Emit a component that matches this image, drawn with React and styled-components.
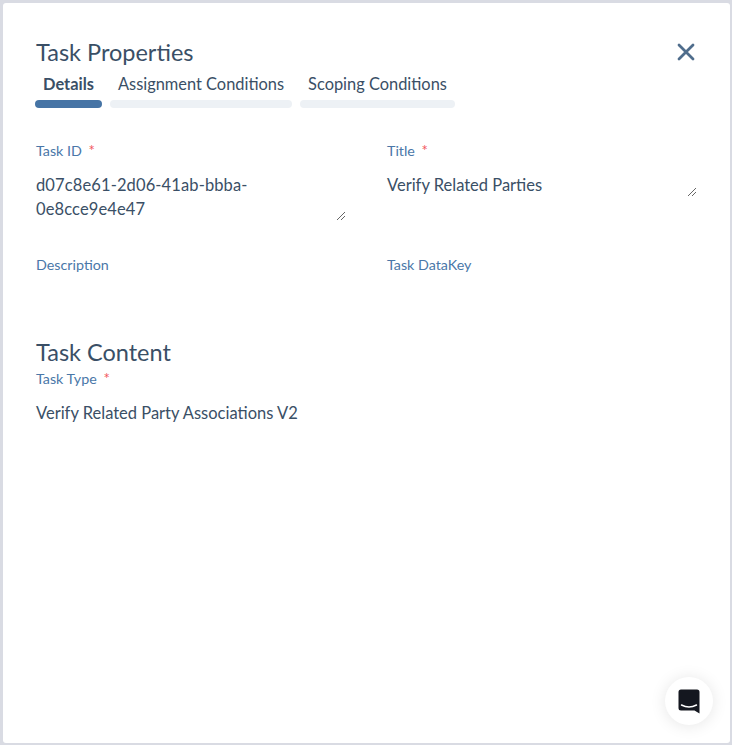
import React from 'react';
import styled, { createGlobalStyle } from 'styled-components';

const GlobalStyle = createGlobalStyle`
  html, body {
    margin: 0;
    padding: 0;
    background: #d9dbe3;
  }
  body {
    font-family: "Lato", "Open Sans", "Liberation Sans", sans-serif;
  }
`;

const App = () => (
  <>
    <GlobalStyle />
    <Page>
      <Panel>
        <Header>
          <Title>Task Properties</Title>
          <CloseButton aria-label="Close">
            <svg width="18" height="18" viewBox="0 0 18 18" fill="none">
              <path d="M2 2 L16 16 M16 2 L2 16" stroke="#4f6d8c" strokeWidth="2.8" strokeLinecap="round" />
            </svg>
          </CloseButton>
        </Header>
        <Tabs>
          <Tab $width={67}>
            <TabLabel $active>Details</TabLabel>
            <TabBar $active />
          </Tab>
          <Tab $width={182}>
            <TabLabel>Assignment Conditions</TabLabel>
            <TabBar />
          </Tab>
          <Tab $width={155}>
            <TabLabel>Scoping Conditions</TabLabel>
            <TabBar />
          </Tab>
        </Tabs>
        <FieldGrid>
          <Field $height={115}>
            <Label>Task ID <Required>*</Required></Label>
            <Value $spacing={0.12}>d07c8e61-2d06-41ab-bbba-<br />0e8cce9e4e47</Value>
            <ResizeGrip $top={71} />
          </Field>
          <Field $height={115}>
            <Label>Title <Required>*</Required></Label>
            <Value>Verify Related Parties</Value>
            <ResizeGrip $top={47} />
          </Field>
          <Field $height={82}>
            <Label>Description</Label>
          </Field>
          <Field $height={82}>
            <Label>Task DataKey</Label>
          </Field>
        </FieldGrid>
        <SectionTitle>Task Content</SectionTitle>
        <Label>Task Type <Required>*</Required></Label>
        <Value>Verify Related Party Associations V2</Value>
      </Panel>
      <ChatBubble aria-label="Chat">
        <svg width="22" height="25" viewBox="0 0 22 25">
          <path
            d="M3 0.5 H19 A2.5 2.5 0 0 1 21.5 3 V24.5 L16.5 21.5 H3 A2.5 2.5 0 0 1 0.5 19 V3 A2.5 2.5 0 0 1 3 0.5 Z"
            fill="#14171f"
          />
          <path d="M3.5 16 Q11 20 18.5 16" fill="none" stroke="#fff" strokeWidth="1.5" strokeLinecap="round" />
        </svg>
      </ChatBubble>
    </Page>
  </>
);

const Page = styled.div`
  position: relative;
  box-sizing: border-box;
  width: 732px;
  height: 745px;
  padding: 3px 2px 2px 3px;
  overflow: hidden;
`;

const Panel = styled.div`
  box-sizing: border-box;
  height: 740px;
  padding: 35px 33px 0;
  background: #fff;
  border-radius: 3px;
  color: #33475b;
`;

const Header = styled.div`
  display: flex;
  align-items: flex-start;
  justify-content: space-between;
  height: 28px;
  padding-right: 2px;
`;

const Title = styled.h1`
  margin: 0;
  font-size: 23.5px;
  line-height: 28px;
  font-weight: 400;
  color: #3a4f66;
`;

const CloseButton = styled.button`
  display: flex;
  margin: 5px 0 0;
  padding: 0;
  border: 0;
  background: none;
`;

const Tabs = styled.div`
  display: flex;
  gap: 8px;
  margin: 9px 0 0 -1px;
`;

const Tab = styled.div`
  display: flex;
  flex-direction: column;
  gap: 7px;
  width: ${p => p.$width}px;
`;

const TabLabel = styled.div`
  font-size: 16.4px;
  line-height: 18px;
  font-weight: ${p => (p.$active ? 700 : 400)};
  text-align: center;
  color: #3a4f66;
`;

const TabBar = styled.div`
  height: 8px;
  border-radius: 4px;
  background: ${p => (p.$active ? '#4674a5' : '#edf1f5')};
`;

const FieldGrid = styled.div`
  display: grid;
  grid-template-columns: 310px 310px;
  column-gap: 41px;
  margin-top: 33px;
`;

const Field = styled.div`
  position: relative;
  height: ${p => p.$height}px;
`;

const Label = styled.div`
  height: 18px;
  font-size: 14.3px;
  line-height: 18px;
  color: #4a77a8;
`;

const Required = styled.span`
  margin-left: 3px;
  font-size: 15px;
  color: #f2545b;
`;

const Value = styled.div`
  margin-top: 14px;
  font-size: 16.5px;
  line-height: 24px;
  letter-spacing: ${p => p.$spacing || 0}px;
  color: #3a4f66;
`;

const ResizeGrip = styled.span`
  position: absolute;
  top: ${p => p.$top}px;
  right: 1px;
  width: 8px;
  height: 8px;
  background: linear-gradient(
    135deg,
    transparent 45%,
    #666 45%,
    #666 52%,
    transparent 52%,
    transparent 72%,
    #666 72%,
    #666 79%,
    transparent 79%
  );
`;

const SectionTitle = styled.h2`
  margin: 0 0 3px;
  font-size: 23.5px;
  line-height: 28px;
  font-weight: 400;
  color: #3a4f66;
`;

const ChatBubble = styled.div`
  position: absolute;
  right: 19px;
  bottom: 20px;
  display: flex;
  align-items: center;
  justify-content: center;
  width: 48px;
  height: 48px;
  background: #fff;
  border-radius: 50%;
  box-shadow: 0 1px 16px rgba(0, 0, 0, 0.1);
`;

export default App;
